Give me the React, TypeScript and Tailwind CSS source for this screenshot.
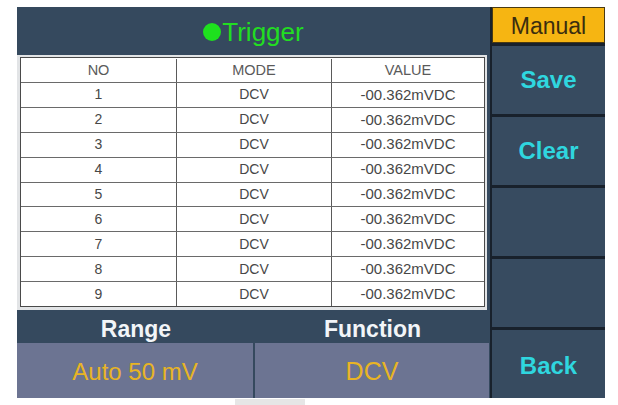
import React from "react";

const rows = ["1", "2", "3", "4", "5", "6", "7", "8", "9"];

function SideBtn({ label, extra }: { label?: string; extra?: string }) {
  return (
    <div className="h-[68px] bg-[#374b60] flex items-center justify-center">
      {label ? (
        <span className={"text-[24px] font-bold text-[#2fd6df] leading-none " + (extra ?? "")}>{label}</span>
      ) : null}
    </div>
  );
}

export default function App() {
  return (
    <div
      className="w-[618px] h-[405px] bg-white overflow-hidden"
      style={{ fontFamily: '"Liberation Sans", Arial, sans-serif' }}
    >
      <div className="ml-[17px] mt-[7px] w-[588px] h-[391px] flex">
        {/* left column */}
        <div className="w-[473px] flex flex-col bg-[#35495e]">
          <div className="h-[48px] flex items-center justify-center pt-[2px]">
            <span className="w-[18px] h-[18px] rounded-full bg-[#1ee01e] mr-[1px]" />
            <span className="text-[26px] leading-none text-[#22dd22]">Trigger</span>
          </div>
          <div className="h-[255px] flex">
            <div className="w-[470px] h-[255px] bg-[#e2e4e6] pl-[3px] pr-[2px] pt-[2px] pb-[3px]">
              <div className="w-[465px] h-[250px] bg-white border border-[#4a4a4a] flex flex-col text-[#474747]">
                <div className="h-[24px] pt-[1px] grid grid-cols-[155px_155px_1fr] text-[14.5px] text-[#5a5a5a]">
                  <div className="flex items-center justify-center">NO</div>
                  <div className="flex items-center justify-center border-l border-[#5a5a5a]">MODE</div>
                  <div className="flex items-center justify-center border-l border-[#5a5a5a]">VALUE</div>
                </div>
                {rows.map((r) => (
                  <div
                    key={r}
                    className="h-[25px] grid grid-cols-[155px_155px_1fr] border-t border-[#6a6a6a]"
                  >
                    <div className="flex items-center justify-center text-[14px]">{r}</div>
                    <div className="flex items-center justify-center border-l border-[#5a5a5a] text-[14px]">
                      DCV
                    </div>
                    <div className="flex items-center justify-center border-l border-[#5a5a5a] text-[15px]">
                      -00.362mVDC
                    </div>
                  </div>
                ))}
              </div>
            </div>
          </div>
          <div className="h-[33px] pt-[2px] grid grid-cols-[238px_1fr] text-[23px] font-bold text-[#f2f5f8]">
            <div className="flex items-center justify-center">Range</div>
            <div className="flex items-center justify-center">Function</div>
          </div>
          <div className="h-[55px] flex gap-[2px] pr-[1px]">
            <div className="w-[236px] bg-[#6c7492] flex items-center justify-center pt-[2px]">
              <span className="text-[24px] text-[#e8b424] leading-none">Auto 50 mV</span>
            </div>
            <div className="flex-1 bg-[#6c7492] flex items-center justify-center pt-[2px]">
              <span className="text-[25px] text-[#e8b424] leading-none">DCV</span>
            </div>
          </div>
        </div>
        {/* sidebar */}
        <div className="w-[115px] bg-[#18212c] pl-[2px] flex flex-col gap-[3px]">
          <div className="h-[36px] bg-[#f6b512] border border-[#4a3a12] flex items-center justify-center pt-[3px]">
            <span className="text-[23px] text-[#3b2d0f] leading-none">Manual</span>
          </div>
          <SideBtn label="Save" />
          <SideBtn label="Clear" />
          <SideBtn />
          <SideBtn />
          <SideBtn label="Back" extra="mt-[3px]" />
        </div>
      </div>
      <div className="ml-[235px] mt-[1px] w-[70px] h-[6px] bg-[#e6e6e6]" />
    </div>
  );
}
